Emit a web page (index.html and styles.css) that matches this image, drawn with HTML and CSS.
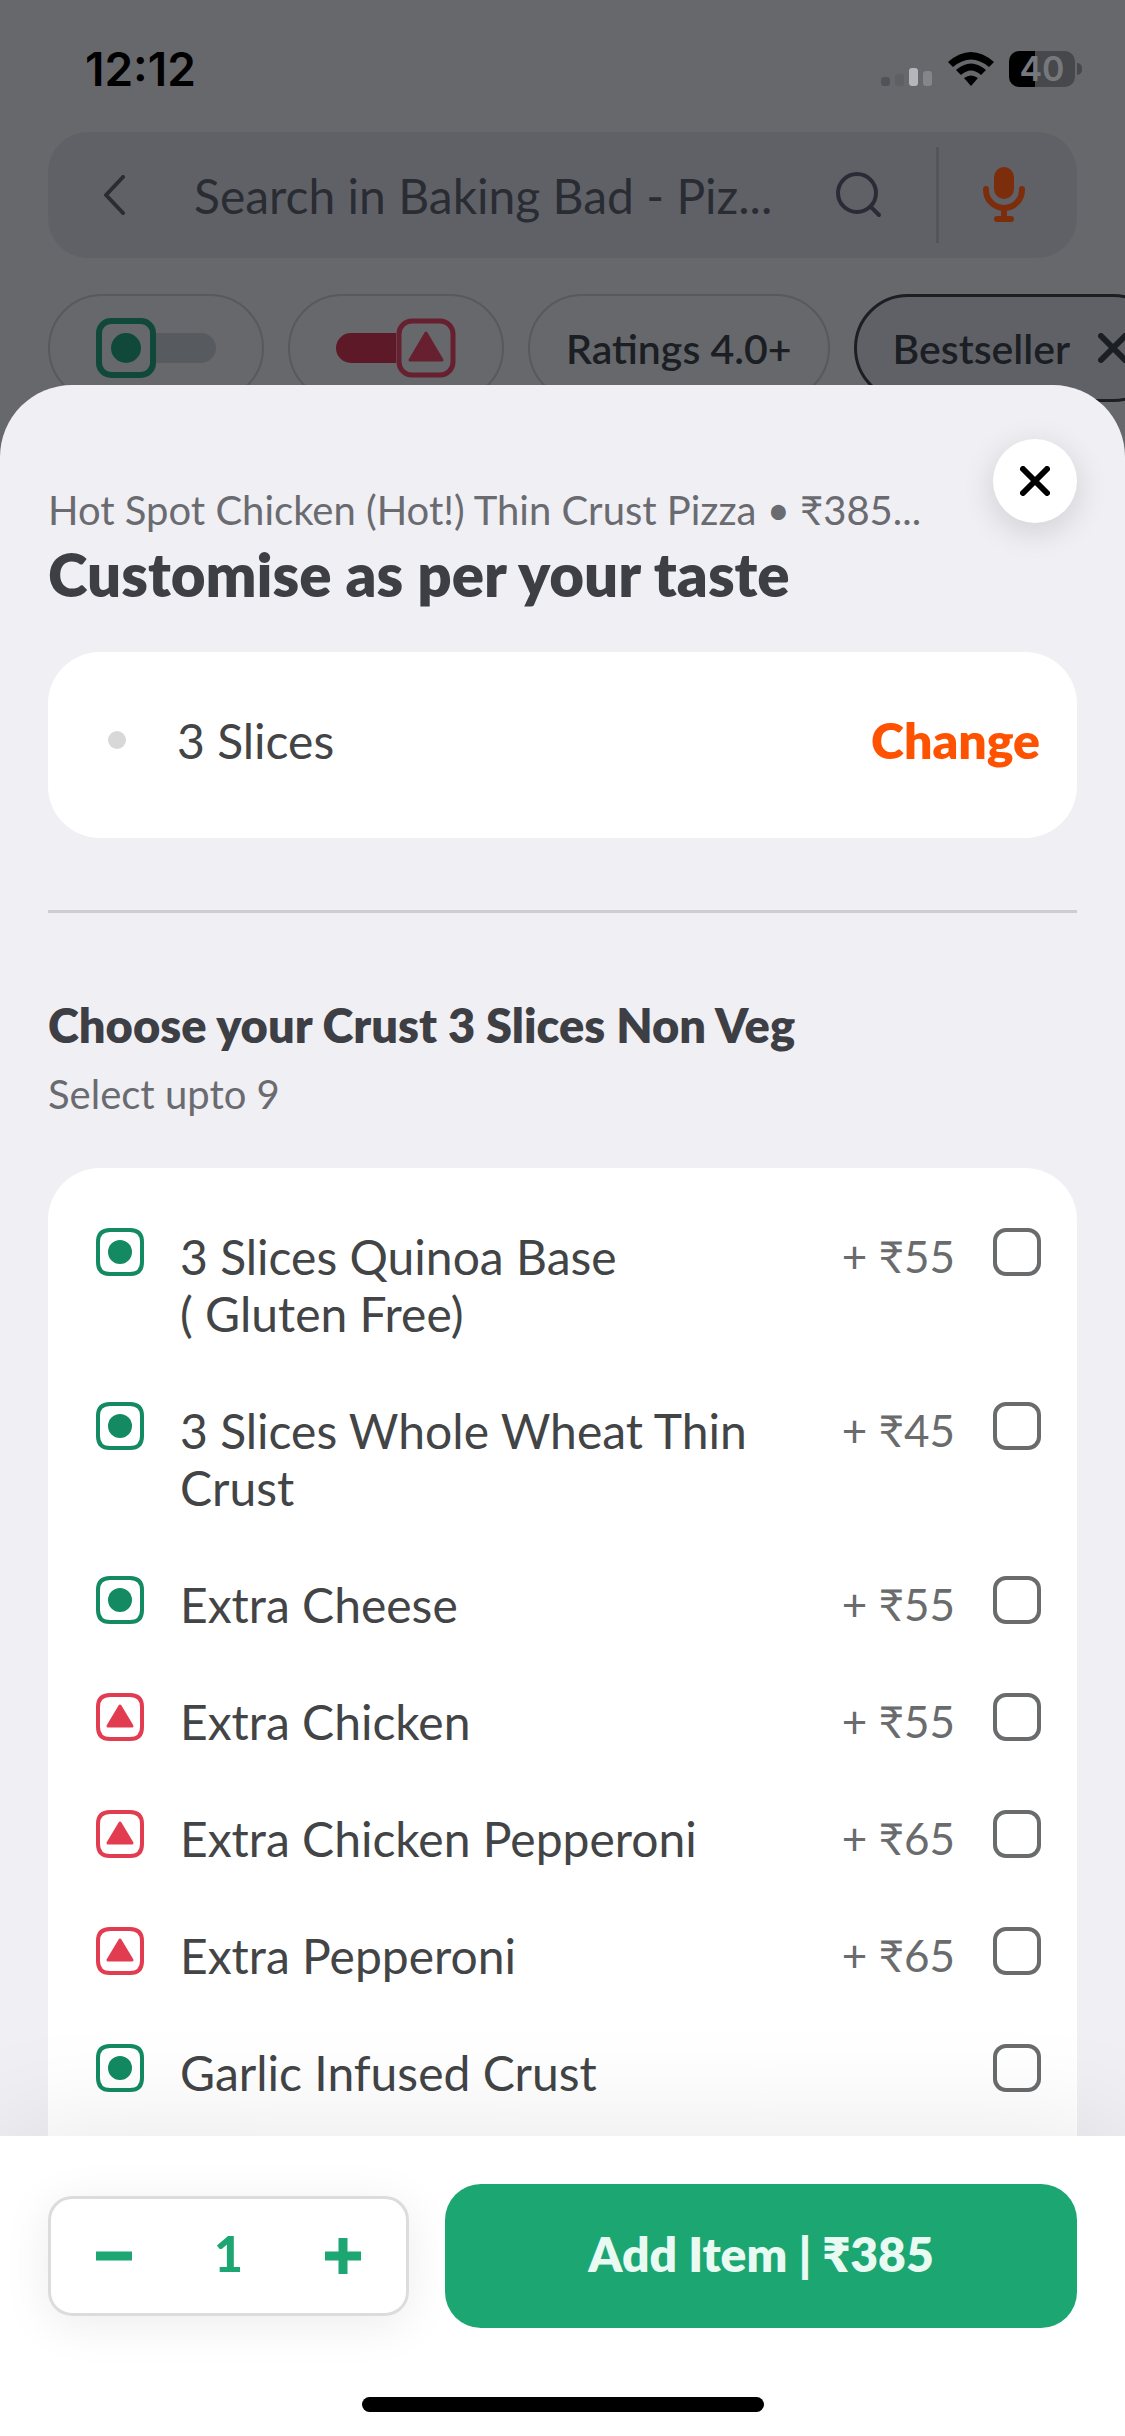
FILE: index.html
```html
<!DOCTYPE html>
<html lang="en">
<head>
<meta charset="utf-8">
<meta name="viewport" content="width=device-width, initial-scale=1">
<title>Customise as per your taste</title>
<link rel="stylesheet" href="styles.css">
</head>
<body>
<svg class="defs" aria-hidden="true">
  <symbol id="veg" viewBox="0 0 48 48">
    <path d="M14 2H34Q46 2 46 14V34Q46 46 34 46H14Q2 46 2 34V14Q2 2 14 2Z" fill="none" stroke="#138a62" stroke-width="4"/>
    <circle cx="24" cy="24" r="12" fill="#138a62"/>
  </symbol>
  <symbol id="nonveg" viewBox="0 0 48 48">
    <path d="M14 2H34Q46 2 46 14V34Q46 46 34 46H14Q2 46 2 34V14Q2 2 14 2Z" fill="none" stroke="#e23c51" stroke-width="4"/>
    <path d="M24 13L36 33H12Z" fill="#e23c51" stroke="#e23c51" stroke-width="3" stroke-linejoin="round"/>
  </symbol>
  <symbol id="cross" viewBox="0 0 30 30">
    <path d="M3 3L27 27M27 3L3 27" fill="none" stroke="currentColor" stroke-width="6" stroke-linecap="round"/>
  </symbol>
</svg>

<div class="app">
  <header class="top">
    <div class="status">
      <span class="clock">12:12</span>
      <div class="indicators">
        <svg class="signal" viewBox="0 0 52 34" aria-hidden="true">
          <rect x="0" y="25" width="9" height="9" rx="3" fill="#525358"/>
          <rect x="14" y="22" width="9" height="12" rx="3" fill="#5f6065"/>
          <rect x="28" y="16" width="9" height="18" rx="3" fill="#b5b5ba"/>
          <rect x="42" y="19" width="9" height="15" rx="3" fill="#85868b"/>
        </svg>
        <svg class="wifi" viewBox="0 0 46 34" aria-hidden="true">
          <path d="M0 10Q23 -10 46 10L41 15Q23 0 5 15Z"/>
          <path d="M8 18Q23 5 38 18L33 23Q23 14 13 23Z"/>
          <path d="M16 26Q23 21 30 26L23 34Z"/>
        </svg>
        <div class="battery"><span>40</span></div>
      </div>
    </div>

    <div class="search">
      <button class="plain" aria-label="Back"><svg width="22" height="40" viewBox="0 0 22 40"><path d="M20 2L3 20L20 38" fill="none" stroke="#292c33" stroke-width="4" stroke-linecap="round" stroke-linejoin="round"/></svg></button>
      <input class="search-field" type="text" aria-label="Search in menu" placeholder="Search in Baking Bad - Piz...">
      <button class="plain" aria-label="Search"><svg width="46" height="46" viewBox="0 0 46 46"><g fill="none" stroke="#292c37" stroke-width="4" stroke-linecap="round"><circle cx="21" cy="21" r="19"/><path d="M35 35L43 43"/></g></svg></button>
      <span class="search-rule"></span>
      <button class="plain" aria-label="Voice search"><svg width="42" height="56" viewBox="0 0 42 56"><rect x="11" y="0" width="20" height="32" rx="10" fill="#7c2d0c"/><path d="M3 22V23A18 18 0 0 0 39 23V22M21 42V50M14 52H28" fill="none" stroke="#7c2d0c" stroke-width="6" stroke-linecap="round"/></svg></button>
    </div>

    <div class="chips">
      <button class="chip chip-toggle" aria-label="Veg only">
        <svg width="120" height="60" viewBox="0 0 120 60"><path d="M60 15H105A15 15 0 0 1 105 45H60Z" fill="#575a5f"/><rect x="3" y="3" width="54" height="54" rx="12" fill="none" stroke="#10493a" stroke-width="6"/><circle cx="30" cy="30" r="15" fill="#10493a"/></svg>
      </button>
      <button class="chip chip-toggle" aria-label="Non-veg only">
        <svg width="120" height="60" viewBox="0 0 120 60"><path d="M60 15H15A15 15 0 0 0 15 45H60Z" fill="#5d1927"/><rect x="63" y="3" width="54" height="54" rx="13" fill="none" stroke="#66202f" stroke-width="5"/><path d="M90 15L106 42H74Z" fill="#66202f" stroke="#66202f" stroke-width="3" stroke-linejoin="round"/></svg>
      </button>
      <button class="chip">Ratings 4.0+</button>
      <button class="chip chip-on">Bestseller <svg width="30" height="30"><use href="#cross"/></svg></button>
    </div>
  </header>

  <main class="sheet">
    <div class="scroll">
      <div class="sheet-head">
        <div class="titles">
          <p class="sub">Hot Spot Chicken (Hot!) Thin Crust Pizza • ₹385...</p>
          <h1>Customise as per your taste</h1>
        </div>
        <button class="close" aria-label="Close"><svg width="30" height="30"><use href="#cross"/></svg></button>
      </div>

      <section class="card picked">
        <span class="dot"></span>
        <span class="picked-name">3 Slices</span>
        <button class="plain change">Change</button>
      </section>

      <hr>

      <h2>Choose your Crust 3 Slices Non Veg</h2>
      <p class="sub">Select upto 9</p>

      <section class="card options">
        <label class="option"><svg class="mark"><use href="#veg"/></svg><span class="name">3 Slices Quinoa Base (&nbsp;Gluten Free)</span><span class="price">+ ₹55</span><input type="checkbox"></label>
        <label class="option"><svg class="mark"><use href="#veg"/></svg><span class="name">3 Slices Whole Wheat Thin Crust</span><span class="price">+ ₹45</span><input type="checkbox"></label>
        <label class="option"><svg class="mark"><use href="#veg"/></svg><span class="name">Extra Cheese</span><span class="price">+ ₹55</span><input type="checkbox"></label>
        <label class="option"><svg class="mark"><use href="#nonveg"/></svg><span class="name">Extra Chicken</span><span class="price">+ ₹55</span><input type="checkbox"></label>
        <label class="option"><svg class="mark"><use href="#nonveg"/></svg><span class="name">Extra Chicken Pepperoni</span><span class="price">+ ₹65</span><input type="checkbox"></label>
        <label class="option"><svg class="mark"><use href="#nonveg"/></svg><span class="name">Extra Pepperoni</span><span class="price">+ ₹65</span><input type="checkbox"></label>
        <label class="option"><svg class="mark"><use href="#veg"/></svg><span class="name">Garlic Infused Crust</span><input type="checkbox"></label>
      </section>
    </div>

    <footer class="bar">
      <div class="actions">
        <div class="stepper">
          <button class="plain" aria-label="Remove one"><svg width="36" height="36" viewBox="0 0 36 36"><path d="M0 18H36" stroke="#1ba672" stroke-width="9"/></svg></button>
          <output>1</output>
          <button class="plain" aria-label="Add one"><svg width="36" height="36" viewBox="0 0 36 36"><path d="M0 18H36M18 0V36" stroke="#1ba672" stroke-width="9"/></svg></button>
        </div>
        <button class="add">Add Item | ₹385</button>
      </div>
      <div class="home"></div>
    </footer>
  </main>
</div>
</body>
</html>
```

FILE: styles.css
```css
* {
  box-sizing: border-box;
}

body {
  margin: 0;
  font-family: Lato, Inter, "Noto Sans", sans-serif;
  font-size: 48px;
  line-height: 57px;
  color: #424446;
}

button,
input {
  font: inherit;
}

h1,
h2,
p {
  margin: 0;
}

svg {
  display: block;
  flex: none;
}

.defs {
  position: absolute;
  width: 0;
  height: 0;
}

.plain {
  padding: 0;
  border: 0;
  background: none;
}

.app {
  display: flex;
  flex-direction: column;
  height: 100vh;
  background: #67686c;
}

/* Dimmed page behind the sheet */

.top {
  flex: none;
  padding: 0 48px 72px;
  overflow: hidden;
}

.status {
  display: flex;
  justify-content: space-between;
  align-items: center;
  height: 132px;
  padding: 6px 0 0 37px;
}

.clock {
  font: 600 46px/48px Inter, sans-serif;
  color: #000;
}

.indicators {
  display: flex;
  align-items: center;
  gap: 15px;
  margin-right: 2px;
}

.signal {
  width: 52px;
  height: 34px;
}

.wifi {
  width: 46px;
  height: 34px;
}

.battery {
  position: relative;
  width: 66px;
  height: 36px;
  border-radius: 10px;
  background: linear-gradient(90deg, #000 26px, #47484b 26px);
  font: 600 34px/36px Inter, sans-serif;
  text-align: center;
  color: #77787c;
}

.battery::after {
  content: "";
  position: absolute;
  left: 68px;
  top: 12px;
  width: 5px;
  height: 12px;
  border-radius: 0 6px 6px 0;
  background: #47484b;
}

.search {
  display: flex;
  align-items: center;
  height: 126px;
  padding: 0 52px 0 55px;
  border-radius: 40px;
  background: #606167;
}

.search-field {
  flex: 1;
  min-width: 0;
  margin: 0 12px 0 69px;
  padding: 0;
  border: 0;
  background: none;
  outline: 0;
}

.search-field::placeholder {
  color: #292d33;
  opacity: 1;
}

.search-rule {
  width: 3px;
  height: 96px;
  margin: 0 44px 0 54px;
  background: #54555a;
}

.chips {
  display: flex;
  gap: 24px;
  margin: 36px -48px 0 0;
  overflow: hidden;
}

.chip {
  display: flex;
  flex: none;
  align-items: center;
  gap: 28px;
  height: 108px;
  padding: 0 36px;
  border: 2px solid #58595d;
  border-radius: 54px;
  background: none;
  font-size: 41px;
  font-weight: 600;
  color: #1b1e23;
}

.chip-toggle {
  padding: 0 46px;
}

.chip-on {
  border: 3px solid #1b1e23;
  background: #606167;
}

/* Bottom sheet */

.sheet {
  position: relative;
  display: flex;
  flex: 1;
  flex-direction: column;
  min-height: 0;
  margin-top: -89px;
  border-radius: 72px 72px 0 0;
  background: #f0eff4;
  overflow: hidden;
}

.scroll {
  flex: 1;
  min-height: 0;
  padding: 54px 48px 0;
  overflow: hidden;
}

.sheet-head {
  display: flex;
  justify-content: space-between;
  align-items: flex-start;
  gap: 24px;
}

.titles {
  flex: 1;
  min-width: 0;
  padding-top: 47px;
}

.sub {
  font-size: 40px;
  line-height: 48px;
  color: #6a6b70;
}

h1 {
  margin-top: 4px;
  font-size: 60px;
  font-weight: 800;
  line-height: 72px;
  color: #3d3f45;
}

.close {
  display: grid;
  place-items: center;
  width: 84px;
  height: 84px;
  padding: 0;
  border: 0;
  border-radius: 50%;
  background: #fff;
  box-shadow: 0 8px 32px rgba(0, 0, 0, 0.14);
  color: #000;
}

.card {
  border-radius: 52px;
  background: #fff;
}

.picked {
  display: flex;
  align-items: center;
  height: 186px;
  margin-top: 42px;
  padding: 0 37px 10px 60px;
}

.dot {
  width: 18px;
  height: 18px;
  margin-right: 51px;
  border-radius: 50%;
  background: #d8d8d8;
}

.picked-name {
  flex: 1;
}

.change {
  font-size: 50px;
  font-weight: 800;
  color: #ff5200;
}

hr {
  height: 3px;
  margin: 72px 0 82px;
  border: 0;
  background: #cdcdd2;
}

h2 {
  margin-bottom: 15px;
  font-size: 47px;
  font-weight: 800;
  line-height: 60px;
  color: #3d3f45;
}

.options {
  display: flex;
  flex-direction: column;
  gap: 60px;
  margin-top: 50px;
  padding: 60px 36px 120px 48px;
}

.option {
  display: flex;
  align-items: flex-start;
}

.mark {
  width: 48px;
  height: 48px;
  margin-right: 36px;
}

.name {
  flex: 1;
  padding-right: 72px;
}

.price {
  font-size: 44px;
  color: #6a6b6d;
}

.option input {
  appearance: none;
  flex: none;
  width: 48px;
  height: 48px;
  margin: 0 0 0 38px;
  border: 4px solid #6a6b6d;
  border-radius: 13px;
  background: #fff;
}

/* Order bar */

.bar {
  position: relative;
  flex: none;
  padding: 48px 48px 24px;
  background: #fff;
  box-shadow: 0 0 120px rgba(0, 0, 0, 0.1);
}

.actions {
  display: grid;
  grid-template-columns: minmax(0, 36fr) minmax(0, 63fr);
  align-items: center;
  gap: 36px;
}

.stepper {
  display: flex;
  justify-content: space-between;
  align-items: center;
  height: 120px;
  padding: 0 45px;
  border: 3px solid #dcdcdd;
  border-radius: 24px;
  box-shadow: 0 8px 48px rgba(0, 0, 0, 0.08);
}

.stepper output {
  padding-bottom: 6px;
  font-size: 50px;
  font-weight: 900;
  color: #1ba672;
}

.add {
  height: 144px;
  padding: 0 0 6px;
  border: 0;
  border-radius: 36px;
  background: #1ba672;
  font-weight: 800;
  color: #e9faf2;
}

.home {
  width: 402px;
  height: 15px;
  margin: 69px auto 0;
  border-radius: 8px;
  background: #000;
}
```
